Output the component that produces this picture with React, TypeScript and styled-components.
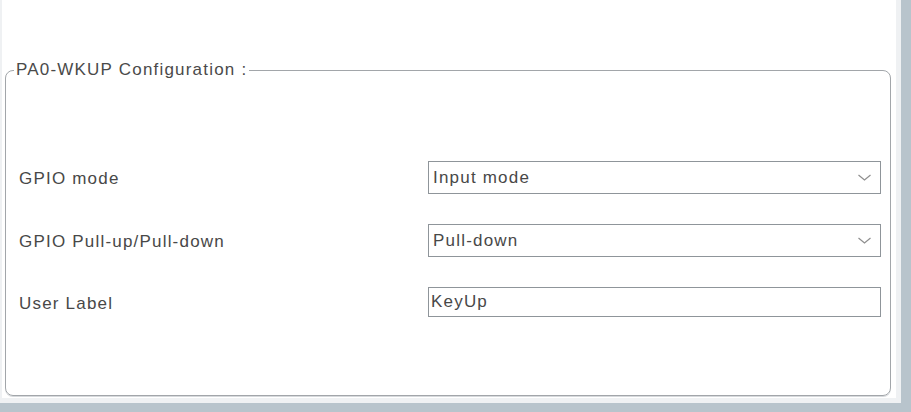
import React from "react";
import styled, { createGlobalStyle } from "styled-components";

const GlobalStyle = createGlobalStyle`
  html, body {
    margin: 0;
    padding: 0;
    background: #b8c4cc;
  }
  body {
    font-family: "Liberation Sans", Arial, sans-serif;
  }
`;

const Frame = styled.div`
  width: 911px;
  height: 412px;
  box-sizing: border-box;
  padding: 0 10px 9px 0;
  background: #b8c4cc;
`;

const Gutter = styled.div`
  height: 100%;
  box-sizing: border-box;
  padding: 0 5px 5px 2px;
  background: #eff1f3;
`;

const Panel = styled.div`
  height: 100%;
  background: #ffffff;
  overflow: hidden;
  padding-top: 60px;
  box-sizing: border-box;
`;

const Group = styled.fieldset`
  margin: 0 5px 0 3px;
  padding: 81px 0 78px 0;
  border: 1px solid #a2a6aa;
  border-radius: 8px;
  box-shadow: 0 1px 0 #d6d9dc;
  min-width: 0;
`;

const GroupTitle = styled.legend`
  margin-left: 8px;
  padding: 0 2px;
  font-size: 17px;
  line-height: 20px;
  letter-spacing: 1.2px;
  color: #4a4a4a;
`;

const Form = styled.div`
  display: grid;
  grid-template-columns: 409px 1fr;
  row-gap: 30px;
  align-items: center;
  padding: 0 9px 0 13px;
`;

const Label = styled.div`
  font-size: 17px;
  letter-spacing: 1.2px;
  color: #484848;
  padding-top: 3px;
`;

const Select = styled.div`
  position: relative;
  height: 33px;
  box-sizing: border-box;
  border: 1px solid #8f959a;
  background: #fff;
  display: flex;
  align-items: center;
  padding-left: 4px;
  font-size: 17px;
  letter-spacing: 1.2px;
  color: #484848;
`;

const Chevron = styled.svg`
  position: absolute;
  right: 9px;
  top: 50%;
  margin-top: -4px;
`;

const TextField = styled.input`
  height: 30px;
  box-sizing: border-box;
  border: 1px solid #8f959a;
  background: #fff;
  padding: 0 0 0 2px;
  margin: 0;
  width: 100%;
  font-family: "Liberation Sans", Arial, sans-serif;
  font-size: 17px;
  letter-spacing: 1.2px;
  color: #484848;
  outline: none;
`;

interface Row {
  label: string;
  value: string;
  kind: "select" | "text";
}

const rows: Row[] = [
  { label: "GPIO mode", value: "Input mode", kind: "select" },
  { label: "GPIO Pull-up/Pull-down", value: "Pull-down", kind: "select" },
  { label: "User Label", value: "KeyUp", kind: "text" },
];

const App = () => {
  return (
    <>
      <GlobalStyle />
      <Frame>
        <Gutter>
          <Panel>
            <Group>
              <GroupTitle>PA0-WKUP Configuration :</GroupTitle>
              <Form>
                {rows.map((row) => (
                  <React.Fragment key={row.label}>
                    <Label>{row.label}</Label>
                    {row.kind === "select" ? (
                      <Select>
                        {row.value}
                        <Chevron width="13" height="7" viewBox="0 0 13 7">
                          <polyline
                            points="0.5,1 6.5,6 12.5,1"
                            fill="none"
                            stroke="#8e8e8e"
                            strokeWidth="1.2"
                          />
                        </Chevron>
                      </Select>
                    ) : (
                      <TextField value={row.value} readOnly />
                    )}
                  </React.Fragment>
                ))}
              </Form>
            </Group>
          </Panel>
        </Gutter>
      </Frame>
    </>
  );
};

export default App;
